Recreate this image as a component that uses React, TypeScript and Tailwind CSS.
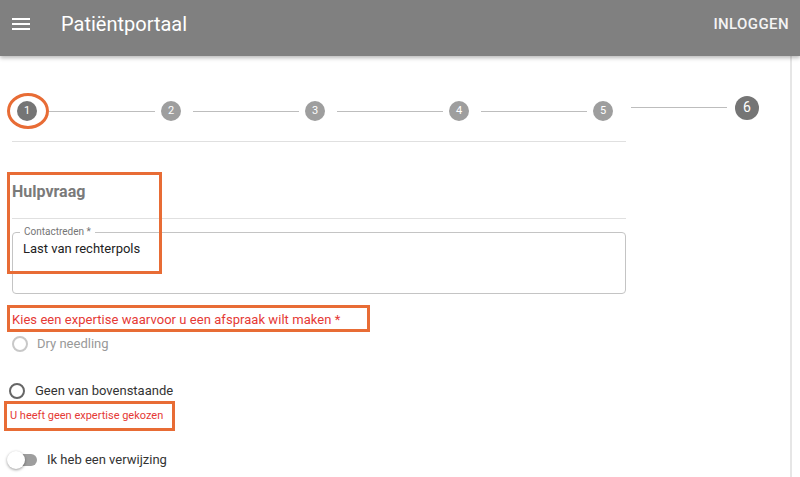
import React from 'react'

const steps = [1, 2, 3, 4, 5]

function Menu() {
  return (
    <svg width="18" height="12" viewBox="0 0 18 12" className="mt-[18px] shrink-0">
      <rect x="0" y="0" width="18" height="2" fill="#fff" />
      <rect x="0" y="5" width="18" height="2" fill="#fff" />
      <rect x="0" y="10" width="18" height="2" fill="#fff" />
    </svg>
  )
}

function Stepper() {
  return (
    <div className="flex h-6 items-center pl-[5px]">
      {steps.map((n) => (
        <React.Fragment key={n}>
          <div
            className={`flex h-5 w-5 shrink-0 items-center justify-center rounded-full text-[11px] text-white ${
              n === 1 ? 'bg-[#757575]' : 'bg-[#9e9e9e]'
            }`}
          >
            {n}
          </div>
          {n < 5 && <div className="ml-3 mr-[6px] h-px w-[106px] shrink-0 bg-[#bdbdbd]" />}
        </React.Fragment>
      ))}
      <div className="mb-[7px] ml-[18px] flex shrink-0 items-center">
        <div className="h-px w-[96px] bg-[#bdbdbd]" />
        <div className="ml-2 flex h-6 w-6 items-center justify-center rounded-full bg-[#757575] text-[14px] text-white">
          6
        </div>
      </div>
    </div>
  )
}

export default function App() {
  return (
    <div className="relative h-[477px] w-[800px] overflow-hidden bg-white font-['Roboto',sans-serif]">
      <header className="relative z-10 flex h-14 items-start bg-[#808080] pl-3 pr-[11px] shadow-[0_2px_4px_rgba(0,0,0,0.28)]">
        <Menu />
        <h1 className="ml-[31px] mt-[10px] text-[20px] leading-7 text-white">Patiëntportaal</h1>
        <button className="ml-auto mt-[14px] text-[15px] font-medium leading-5 tracking-[0.4px] text-[#f4f4f4]">
          INLOGGEN
        </button>
      </header>

      <main className="flex h-[421px] w-[792px] flex-col border-r-2 border-[#e6e6e6] pl-3 pt-[43px]">
        <Stepper />
        <div className="mt-[18px] h-px w-[614px] bg-[#e0e0e0]" />

        <h2 className="mt-[38px] text-base font-bold leading-6 text-[#7a7a7a]">Hulpvraag</h2>
        <div className="mt-[14px] h-px w-[614px] bg-[#e0e0e0]" />

        <div className="relative mt-[13px] h-[62px] w-[614px] rounded border border-[#c4c4c4]">
          <span className="absolute -top-[8px] left-[7px] bg-white px-1 text-[10px] leading-[14px] text-[#757575]">
            Contactreden *
          </span>
          <p className="pl-[10px] pt-[6px] text-[13px] leading-5 text-[#222]">Last van rechterpols</p>
        </div>

        <p className="mt-[16px] text-[13px] leading-5 tracking-[0.05px] text-[#e53935]">
          Kies een expertise waarvoor u een afspraak wilt maken *
        </p>

        <label className="mt-[4px] flex h-5 items-center">
          <span className="h-4 w-4 shrink-0 rounded-full border-2 border-[#c8c8c8]" />
          <span className="ml-[9px] text-[13px] text-[#999]">Dry needling</span>
        </label>

        <label className="mt-[27px] flex h-5 items-center">
          <span className="-ml-[3px] h-4 w-4 shrink-0 rounded-full border-2 border-[#666]" />
          <span className="ml-[10px] text-[13px] text-[#333]">Geen van bovenstaande</span>
        </label>

        <p className="-ml-[2px] mt-[7px] text-[11px] leading-4 text-[#e53935]">U heeft geen expertise gekozen</p>

        <div className="mt-[27px] flex h-[18px] items-center">
          <div className="relative -ml-[5px] h-[18px] w-[30px] shrink-0">
            <div className="absolute left-[3px] top-[3px] h-[12px] w-[27px] rounded-full bg-[#9e9e9e]" />
            <div className="absolute left-0 top-0 h-[18px] w-[18px] rounded-full bg-white shadow-[0_1px_3px_rgba(0,0,0,0.4)]" />
          </div>
          <span className="ml-[10px] text-[13px] text-[#333]">Ik heb een verwijzing</span>
        </div>
      </main>

      {/* annotation marks */}
      <div className="pointer-events-none absolute left-[7px] top-[93px] h-[36px] w-[42px] rounded-[50%] border-[3px] border-[#e86c35]" />
      <div className="pointer-events-none absolute left-[7px] top-[172px] h-[102px] w-[155px] border-[3px] border-[#e86c35]" />
      <div className="pointer-events-none absolute left-[7px] top-[305px] h-[27px] w-[363px] border-[3px] border-[#e86c35]" />
      <div className="pointer-events-none absolute left-[4px] top-[401px] h-[30px] w-[171px] border-[3px] border-[#e86c35]" />
    </div>
  )
}
